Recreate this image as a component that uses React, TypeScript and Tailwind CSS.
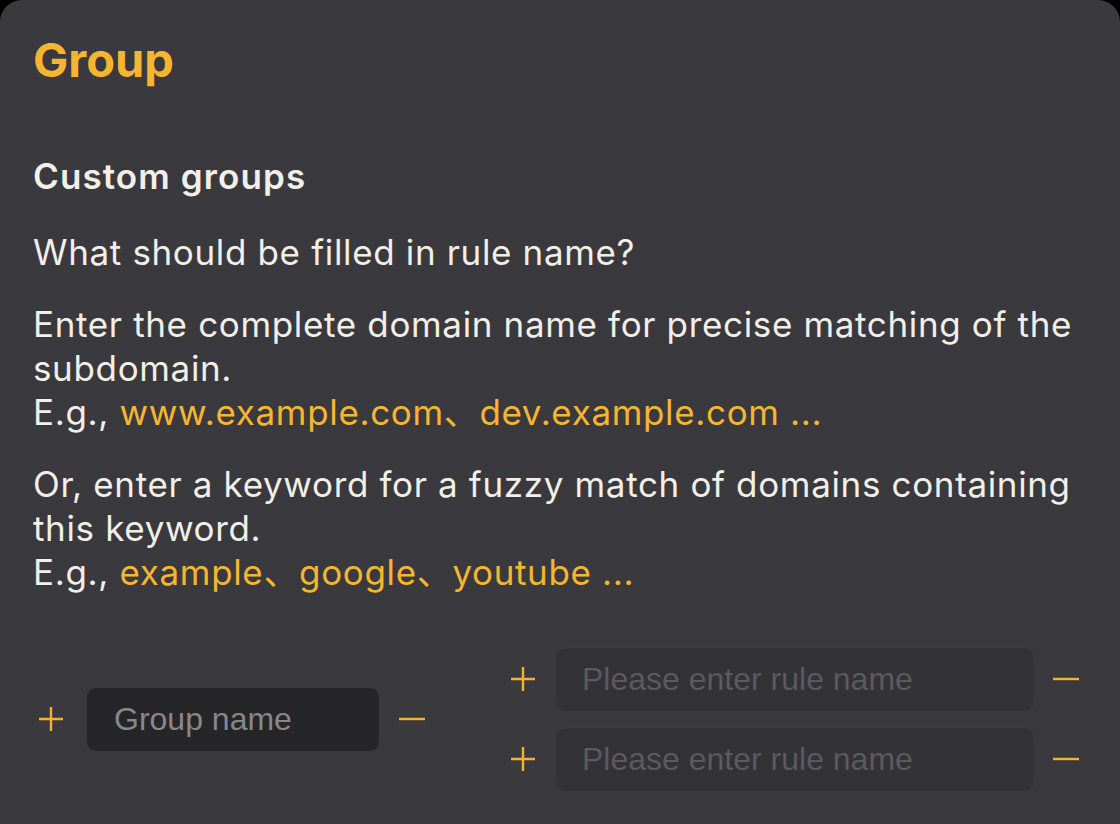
const Plus = () => (
  <svg width="26" height="26" viewBox="0 0 26 26" className="shrink-0">
    <path d="M1 13H25M13 1V25" stroke="#f4b22f" strokeWidth="2.4" />
  </svg>
);

const Minus = () => (
  <svg width="26" height="26" viewBox="0 0 26 26" className="shrink-0">
    <path d="M0 13H26" stroke="#f4b22f" strokeWidth="2.4" />
  </svg>
);

const RuleRow = () => (
  <div className="flex items-center">
    <Plus />
    <input
      placeholder="Please enter rule name"
      className="ml-[20px] h-[64px] w-[478px] rounded-[10px] border-t border-[#3f3e43] bg-[#333236] px-[26px] font-['Liberation_Sans',Arial,sans-serif] text-[32px] text-[#f0ede4] outline-none placeholder:text-[#5b5a5e]"
    />
    <div className="ml-[19px]">
      <Minus />
    </div>
  </div>
);

export default function App() {
  return (
    <div className="min-h-screen bg-black font-['Inter','Noto_Sans_CJK_SC',sans-serif]">
      <div className="min-h-[824px] rounded-t-[22px] bg-[#3a393e] px-[33px] pt-[32px]">
        <h1 className="text-[47px] font-bold leading-[56px] text-[#f6b531]">Group</h1>

        <h2 className="mt-[66px] text-[35px] font-semibold leading-[44px] tracking-[1.1px] text-[#f2efe6]">
          Custom groups
        </h2>

        <div className="text-[35px] leading-[44px] tracking-[0.65px] text-[#f2efe6]">
          <p className="mt-[32px]">What should be filled in rule name?</p>
          <p className="mt-[28px]">
            Enter the complete domain name for precise matching of the subdomain.
            <br />
            E.g., <span className="text-[#f6b531]">www.example.com、dev.example.com ...</span>
          </p>
          <p className="mt-[28px]">
            Or, enter a keyword for a fuzzy match of domains containing this keyword.
            <br />
            E.g., <span className="text-[#f6b531]">example、google、youtube ...</span>
          </p>
        </div>

        <div className="mt-[53px] flex items-center pl-[5px]">
          <Plus />
          <input
            placeholder="Group name"
            className="ml-[23px] h-[63px] w-[292px] rounded-[9px] bg-[#262528] px-[27px] font-['Liberation_Sans',Arial,sans-serif] text-[32px] text-[#f0ede4] outline-none placeholder:text-[#88878b]"
          />
          <div className="ml-[20px]">
            <Minus />
          </div>
          <div className="ml-[85px] flex flex-col gap-[16px]">
            <RuleRow />
            <RuleRow />
          </div>
        </div>
      </div>
    </div>
  );
}
